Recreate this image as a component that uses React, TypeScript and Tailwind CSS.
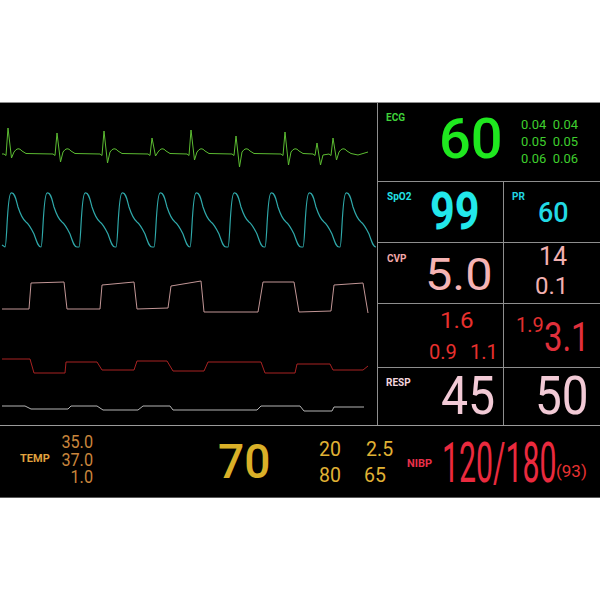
import React from "react";

const ecgBeats = [
  { x: 8, p: 128, t: 158, T: true },
  { x: 57, p: 133, t: 162, T: true },
  { x: 104, p: 131, t: 163, T: true },
  { x: 152, p: 138, t: 156, T: true },
  { x: 191, p: 130, t: 160, T: true },
  { x: 236, p: 136, t: 167, T: true },
  { x: 285, p: 132, t: 165, T: true },
  { x: 317, p: 143, t: 165, T: false },
  { x: 333, p: 138, t: 160, T: true },
];

function ecgPath() {
  const b0 = 154;
  let d = `M2 ${b0}`;
  for (const b of ecgBeats) {
    d += ` L${b.x - 4} ${b0} L${b.x - 2} ${b0 + 1.5} L${b.x} ${b.p} L${b.x + 3.5} ${b.t}`;
    if (b.T) {
      d += ` L${b.x + 6} ${b0 - 2} Q${b.x + 10} ${b0 - 8} ${b.x + 14} ${b0 - 3} L${b.x + 18} ${b0 - 0.5}`;
    } else {
      d += ` L${b.x + 6} ${b0 + 1}`;
    }
  }
  d += ` L358 ${b0 + 1} L368 ${b0 - 2}`;
  return d;
}

function plethPath() {
  const peaks = [13, 49, 87, 124, 162, 198, 236, 273, 311, 348];
  let d = "M2 245 L5 247";
  for (const p of peaks) {
    d += ` L${p - 8} 247 C${p - 6} 247 ${p - 6} 194 ${p - 2} 193 C${p + 2} 192 ${p + 3} 200 ${p + 5} 207 C${p + 7} 213 ${p + 9} 219 ${p + 13} 222 C${p + 16} 224 ${p + 18} 228 ${p + 21} 234 C${p + 24} 242 ${p + 25} 247 ${p + 28} 247`;
  }
  return d;
}

const cvp =
  "M2 309 L29 309 L31 283 L64 282 L67 309 L100 309 L102 285 L134 282 L137 309 L168 308 L171 286 L201 281 L204 312 L258 312 L263 282 L294 282 L299 312 L331 311 L334 285 L363 283 L368 313";
const red =
  "M2 359 L30 359 L34 373 L65 373 L66 362 L97 362 L102 370 L134 370 L137 361 L167 361 L173 371 L204 371 L208 362 L261 362 L265 373 L295 373 L297 364 L330 364 L333 370 L363 370 L368 366";
const gray =
  "M2 406 L25 406 L31 409 L68 409 L71 406 L97 406 L103 410 L138 410 L143 406 L170 406 L173 410 L257 410 L261 406 L300 406 L304 411 L332 411 L334 407 L364 407";

function Waves() {
  return (
    <svg width="377" height="322" viewBox="0 103 377 322" className="block">
      <path d={ecgPath()} fill="none" stroke="#5cbc32" strokeWidth="1" strokeLinejoin="round" />
      <path d={plethPath()} fill="none" stroke="#2fa9aa" strokeWidth="1.2" />
      <path d={cvp} fill="none" stroke="#c29696" strokeWidth="1" />
      <path d={red} fill="none" stroke="#a82222" strokeWidth="1" />
      <path d={gray} fill="none" stroke="#b4b4b4" strokeWidth="1" />
    </svg>
  );
}

const pos = "col-start-1 row-start-1 self-start justify-self-start whitespace-nowrap";
const cellItem = `${pos} leading-none`;

export default function App() {
  return (
    <div className="w-[600px] h-[600px] pt-[102px] bg-white font-['Roboto',sans-serif]">
      <div className="h-[396px] bg-black border-t border-t-[#8e8e8e] border-b border-b-[#5a5a5a] flex flex-col">
        {/* top section */}
        <div className="h-[323px] flex border-b border-b-[#9a9a9a]">
          <div className="w-[378px] border-r border-r-[#8e8e8e] overflow-hidden">
            <Waves />
          </div>
          <div className="flex-1 flex flex-col">
            {/* ECG */}
            <div className="h-[79px] border-b border-b-[#8e8e8e] grid">
              <div className={`${cellItem} ml-[8px] mt-[10px] text-[10px] font-bold text-[#3fd23a]`}>ECG</div>
              <div className={`${cellItem} ml-[61px] mt-[8px] text-[56px] font-medium text-[#1fe81f]`}>60</div>
              <div className={`${pos} ml-[143px] mt-[13px] text-[13.5px] leading-[17px] text-[#3fcf2e] origin-top-left scale-x-[0.96] grid grid-cols-[33px_auto]`}>
                <span>0.04</span>
                <span>0.04</span>
                <span>0.05</span>
                <span>0.05</span>
                <span>0.06</span>
                <span>0.06</span>
              </div>
            </div>
            {/* SpO2 / PR */}
            <div className="h-[61px] border-b border-b-[#8e8e8e] flex">
              <div className="w-[126px] border-r border-r-[#8e8e8e] grid">
                <div className={`${cellItem} ml-[9px] mt-[10px] text-[10px] font-bold text-[#22e2e6]`}>SpO2</div>
                <div className={`${cellItem} ml-[52px] mt-[4px] text-[52px] font-bold text-[#22e8ea] origin-left scale-x-[0.83]`}>99</div>
              </div>
              <div className="flex-1 grid">
                <div className={`${cellItem} ml-[8px] mt-[10px] text-[10px] font-bold text-[#22d6e2]`}>PR</div>
                <div className={`${cellItem} ml-[34px] mt-[17px] text-[28px] font-medium text-[#22dae4] origin-left scale-x-[0.96]`}>60</div>
              </div>
            </div>
            {/* CVP */}
            <div className="h-[61px] border-b border-b-[#8e8e8e] flex">
              <div className="w-[126px] border-r border-r-[#8e8e8e] grid">
                <div className={`${cellItem} ml-[9px] mt-[11px] text-[10px] font-bold text-[#f2a8a8]`}>CVP</div>
                <div className={`${cellItem} ml-[47px] mt-[9px] text-[45px] text-[#f6b4b4] origin-left scale-x-[1.08]`}>5.0</div>
              </div>
              <div className="flex-1 grid">
                <div className={`${cellItem} ml-[35px] mt-[1px] text-[25px] text-[#f2b0b0]`}>14</div>
                <div className={`${cellItem} ml-[31px] mt-[31px] text-[24px] text-[#f2b0b0]`}>0.1</div>
              </div>
            </div>
            {/* row 4 */}
            <div className="h-[64px] border-b border-b-[#8e8e8e] flex">
              <div className="w-[126px] border-r border-r-[#8e8e8e] grid">
                <div className={`${cellItem} ml-[62px] mt-[6px] text-[22px] text-[#e8302e] origin-left scale-x-[1.1]`}>1.6</div>
                <div className={`${cellItem} ml-[51px] mt-[38px] text-[20px] text-[#e8302e]`}>0.9</div>
                <div className={`${cellItem} ml-[92px] mt-[38px] text-[20px] text-[#e8302e]`}>1.1</div>
              </div>
              <div className="flex-1 grid">
                <div className={`${cellItem} ml-[12px] mt-[11px] text-[21px] text-[#e23030] origin-left scale-x-[0.95]`}>1.9</div>
                <div className={`${cellItem} ml-[40px] mt-[14px] text-[40px] text-[#e0303c] origin-left scale-x-[0.82]`}>3.1</div>
              </div>
            </div>
            {/* RESP */}
            <div className="h-[57px] flex">
              <div className="w-[126px] border-r border-r-[#8e8e8e] grid">
                <div className={`${cellItem} ml-[8px] mt-[10px] text-[10px] font-bold text-[#f4d6de]`}>RESP</div>
                <div className={`${cellItem} ml-[63px] mt-[2px] text-[53px] text-[#f2cad6] origin-left scale-x-[0.91]`}>45</div>
              </div>
              <div className="flex-1 grid">
                <div className={`${cellItem} ml-[31px] mt-[2px] text-[53px] text-[#f2cad6] origin-left scale-x-[0.9]`}>50</div>
              </div>
            </div>
          </div>
        </div>
        {/* bottom section */}
        <div className="flex-1 grid">
          <div className={`${cellItem} ml-[20px] mt-[27px] text-[11px] font-bold text-[#e0a23e]`}>TEMP</div>
          <div className={`${pos} w-[93px] mt-[7px] text-[18px] leading-[17.5px] text-[#c9863c] flex flex-col items-end origin-top-right scale-x-[0.9]`}>
            <span>35.0</span>
            <span>37.0</span>
            <span>1.0</span>
          </div>
          <div className={`${cellItem} ml-[218px] mt-[11px] text-[49px] font-medium text-[#dab028] origin-left scale-x-[0.94]`}>70</div>
          <div className={`${cellItem} ml-[319px] mt-[13px] text-[21px] text-[#e0b234] origin-left scale-x-[0.93]`}>20</div>
          <div className={`${cellItem} ml-[366px] mt-[13px] text-[21px] text-[#e0b234] origin-left scale-x-[0.93]`}>2.5</div>
          <div className={`${cellItem} ml-[319px] mt-[39px] text-[21px] text-[#e0b234] origin-left scale-x-[0.93]`}>80</div>
          <div className={`${cellItem} ml-[364px] mt-[39px] text-[21px] text-[#e0b234] origin-left scale-x-[0.93]`}>65</div>
          <div className={`${cellItem} ml-[407px] mt-[32px] text-[11px] font-bold text-[#e8304a]`}>NIBP</div>
          <div className={`${cellItem} ml-[442px] mt-[10px] text-[55px] text-[#ea2a3e] origin-left scale-x-[0.55]`}>120/180</div>
          <div className={`${cellItem} ml-[556px] mt-[37px] text-[17px] text-[#e83232]`}>(93)</div>
        </div>
      </div>
    </div>
  );
}
